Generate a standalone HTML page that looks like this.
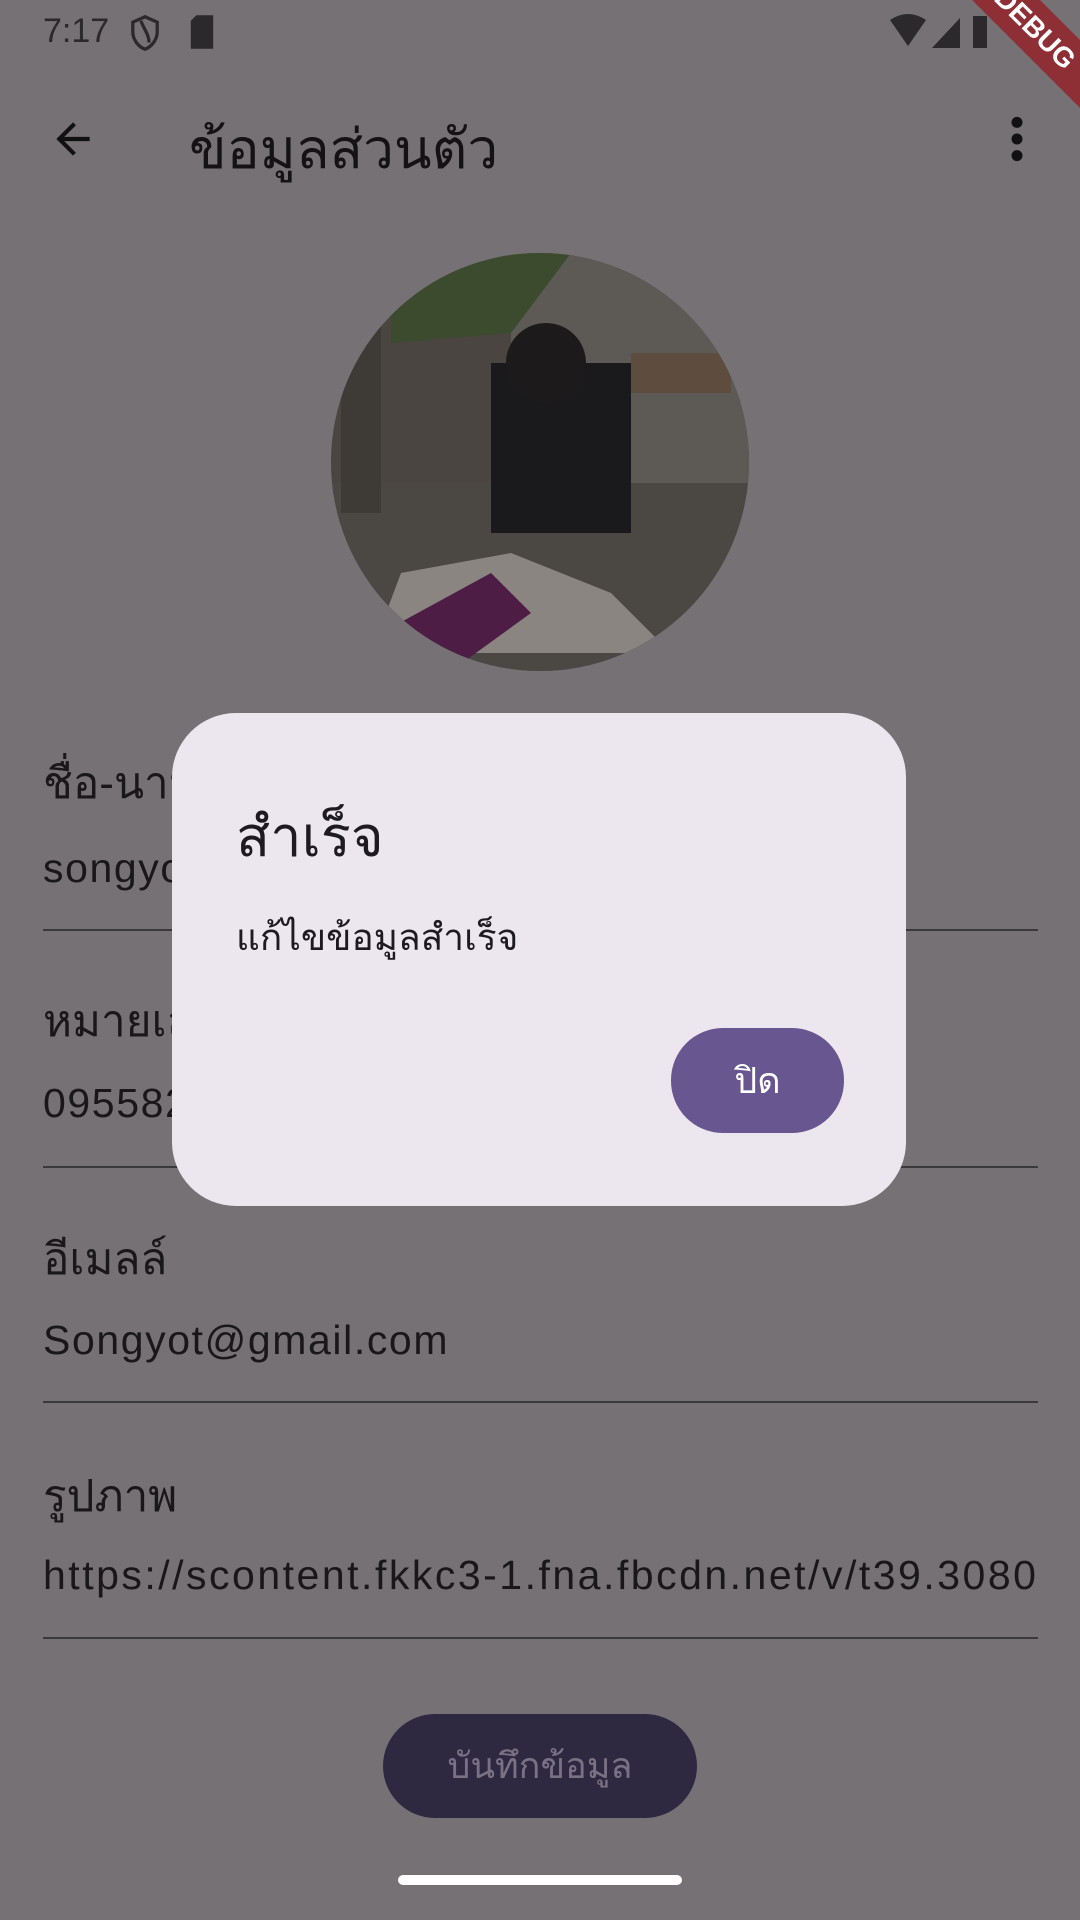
<!DOCTYPE html>
<html><head><meta charset="utf-8"><style>
body{margin:0;width:1080px;height:1920px;background:#757175;position:relative;overflow:hidden;font-family:"Liberation Sans",sans-serif;color:#1a171b}
.a{position:absolute;white-space:nowrap}
.lbl{font-size:44px;left:43px}
.val{font-size:41px;left:43px;letter-spacing:1.6px}
.line{position:absolute;left:43px;width:995px;height:2px;background:#3b383c}
</style></head><body>
<div class="a" style="left:43px;top:12px;font-size:34px;color:#2b292c">7:17</div>
<svg class="a" style="left:128px;top:14px" width="34" height="38" viewBox="0 0 24 28"><path d="M12 2L3 6v7c0 6 4 11 9 13 5-2 9-7 9-13V6z M9 5c2 6 6 10 6 16" fill="none" stroke="#2b292c" stroke-width="2.4"/></svg>
<svg class="a" style="left:188px;top:15px" width="28" height="34" viewBox="0 0 20 24"><path d="M6 0h12v24H2V4z" fill="#2b292c"/></svg>
<svg class="a" style="left:890px;top:14px" width="110" height="36" viewBox="0 0 110 36"><path d="M0 6q18-12 36 0L18 32z" fill="#2b292c"/><path d="M42 34L70 4v30z" fill="#2b292c"/><rect x="83" y="2" width="14" height="32" fill="#2b292c"/></svg>
<div class="a" style="width:260px;height:48px;background:#8e2f35;transform:rotate(45deg);transform-origin:0 0;color:#fff;font-weight:bold;font-size:28px;text-align:center;line-height:48px;left:960px;top:-80px">DEBUG</div>
<svg class="a" style="left:48px;top:114px" width="50" height="50" viewBox="0 0 24 24"><path d="M20 11H7.8l5.6-5.6L12 4l-8 8 8 8 1.4-1.4L7.8 13H20z" fill="#111"/></svg>
<div class="a" style="left:189px;top:106px;font-size:55px;color:#141214">ข้อมูลส่วนตัว</div>
<svg class="a" style="left:1003px;top:114px" width="28" height="50" viewBox="0 0 10 30"><circle cx="5" cy="5" r="3.3" fill="#111"/><circle cx="5" cy="15" r="3.3" fill="#111"/><circle cx="5" cy="25" r="3.3" fill="#111"/></svg>
<svg class="a" style="left:331px;top:253px" width="418" height="418" viewBox="0 0 418 418"><defs><clipPath id="c"><circle cx="209" cy="209" r="209"/></clipPath></defs><g clip-path="url(#c)"><rect width="418" height="418" fill="#4a4540"/><rect x="180" y="0" width="238" height="230" fill="#5d5955"/><rect x="0" y="230" width="418" height="188" fill="#4b4743"/><path d="M60 0h180l-60 80-120 10z" fill="#3c4a2e"/><rect x="160" y="110" width="140" height="170" fill="#1a1a1c"/><circle cx="215" cy="110" r="40" fill="#1c1a1b"/><path d="M70 320l110-20 100 40 60 60H40z" fill="#8a8580"/><path d="M50 380l110-60 40 40-80 58z" fill="#4d1d45"/><rect x="10" y="60" width="40" height="200" fill="#3e3a36"/><rect x="300" y="100" width="100" height="40" fill="#5e4c3e"/></g></svg>
<div class="a lbl" style="top:748px">ชื่อ-นามสกุล</div>
<div class="a val" style="top:845px">songyot</div>
<div class="line" style="top:929px"></div>
<div class="a lbl" style="top:986px">หมายเลขโทรศัพท์</div>
<div class="a val" style="top:1080px">0955823456</div>
<div class="line" style="top:1166px"></div>
<div class="a lbl" style="top:1224px">อีเมลล์</div>
<div class="a val" style="top:1317px">Songyot@gmail.com</div>
<div class="line" style="top:1401px"></div>
<div class="a lbl" style="top:1461px">รูปภาพ</div>
<div class="a val" style="top:1552px;letter-spacing:2.5px">https://scontent.fkkc3-1.fna.fbcdn.net/v/t39.3080</div>
<div class="line" style="top:1637px"></div>
<div class="a" style="left:383px;top:1714px;width:314px;height:104px;border-radius:52px;background:#2f2841;color:#7a7284;font-size:36px;text-align:center;line-height:104px">บันทึกข้อมูล</div>
<div class="a" style="left:398px;top:1875px;width:284px;height:10px;border-radius:5px;background:#fff"></div>
<div class="a" style="left:172px;top:713px;width:734px;height:493px;border-radius:64px;background:#ece6ee"></div>
<div class="a" style="left:236px;top:792px;font-size:56px;color:#1d1a20">สำเร็จ</div>
<div class="a" style="left:236px;top:908px;font-size:37px;color:#1d1a20">แก้ไขข้อมูลสำเร็จ</div>
<div class="a" style="left:671px;top:1028px;width:173px;height:105px;border-radius:52px;background:#67568f;color:#fff;font-size:36px;text-align:center;line-height:105px">ปิด</div>
</body></html>
